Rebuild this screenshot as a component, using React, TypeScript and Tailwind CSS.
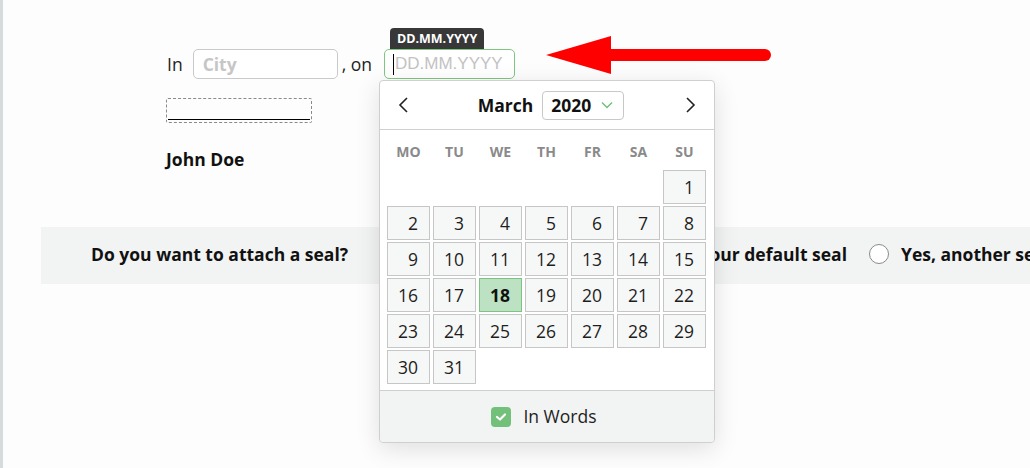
import React from 'react';

const font = { fontFamily: '"Open Sans", "Liberation Sans", sans-serif' };

const days = [
  null, null, null, null, null, null, 1,
  2, 3, 4, 5, 6, 7, 8,
  9, 10, 11, 12, 13, 14, 15,
  16, 17, 18, 19, 20, 21, 22,
  23, 24, 25, 26, 27, 28, 29,
  30, 31,
];

const weekDays = ['MO', 'TU', 'WE', 'TH', 'FR', 'SA', 'SU'];

function Chevron({ dir }: { dir: 'left' | 'right' }) {
  return (
    <svg width="16" height="18" viewBox="0 0 16 18" fill="none" stroke="#222" strokeWidth="1.6">
      {dir === 'left' ? <path d="M11 2 L4 9 L11 16" /> : <path d="M5 2 L12 9 L5 16" />}
    </svg>
  );
}

function DatePicker() {
  return (
    <div className="absolute left-[-5px] top-[31px] z-20 flex w-[336px] flex-col rounded-[4px] border border-[#cfcfcf] bg-white shadow-[0_6px_24px_rgba(0,0,0,0.12)]">
      <div className="flex h-[49px] items-center justify-between border-b border-[#d0d0d0] px-[16px]">
        <Chevron dir="left" />
        <div className="flex items-center gap-[9px] pl-[8px]">
          <span className="text-[17.5px] font-bold text-[#111]">March</span>
          <div className="flex h-[29px] w-[82px] items-center justify-between rounded-[4px] border border-[#c8c8c8] pl-[8px] pr-[10px]">
            <span className="text-[17.5px] font-bold text-[#111]">2020</span>
            <svg width="12" height="8" viewBox="0 0 12 8" fill="none" stroke="#6cc07a" strokeWidth="1.4">
              <path d="M1 1.5 L6 6.5 L11 1.5" />
            </svg>
          </div>
        </div>
        <Chevron dir="right" />
      </div>
      <div className="pb-[6px] pl-[7px] pr-[8px]">
        <div className="grid h-[40px] grid-cols-[repeat(7,43px)] items-center gap-x-[3px] pt-[2px]">
          {weekDays.map((d) => (
            <span key={d} className="text-center text-[14px] font-bold text-[#8a8a8a]">
              {d}
            </span>
          ))}
        </div>
        <div className="grid grid-cols-[repeat(7,43px)] gap-x-[3px] gap-y-[2px]">
          {days.map((d, i) =>
            d === null ? (
              <div key={i} className="h-[34px]" />
            ) : d === 18 ? (
              <div
                key={i}
                className="flex h-[34px] items-center justify-end border border-[#7cc47f] bg-[#bde2c3] pr-[11px] text-[17.5px] font-bold text-[#111]"
              >
                {d}
              </div>
            ) : (
              <div
                key={i}
                className="flex h-[34px] items-center justify-end border border-[#c6c6c6] bg-[#f6f8f8] pr-[11px] text-[17.5px] text-[#1e1e1e]"
              >
                {d}
              </div>
            )
          )}
        </div>
      </div>
      <div className="flex h-[52px] items-center justify-center gap-[12px] rounded-b-[4px] border-t border-[#cfcfcf] bg-[#f2f3f3] pr-[6px]">
        <div className="flex h-[20px] w-[20px] items-center justify-center rounded-[4px] bg-[#72c07a]">
          <svg width="12" height="10" viewBox="0 0 12 10" fill="none" stroke="#fff" strokeWidth="2.2" strokeLinecap="round" strokeLinejoin="round">
            <path d="M2 5 L5 7.5 L10 2.5" />
          </svg>
        </div>
        <span className="text-[17.5px] text-[#1e1e1e]">In Words</span>
      </div>
    </div>
  );
}

export default function App() {
  return (
    <div className="relative h-[468px] w-[1030px] overflow-hidden border-l-[3px] border-[#d6dbdb] bg-[#fdfdfd]" style={font}>
      <div className="flex flex-col pt-[49px]">
        <div className="flex h-[30px] items-center pl-[164px] text-[17.5px] text-[#222]">
          <span>In</span>
          <div className="ml-[10px] flex h-[30px] w-[145px] items-center rounded-[5px] border border-[#c9c9c9] bg-white pl-[9px]">
            <span className="font-bold text-[#c6c6c6]">City</span>
          </div>
          <span className="ml-[4px]">, on</span>
          <div className="relative ml-[12px]">
            <div className="absolute left-[6px] top-[-21px] whitespace-nowrap rounded-t-[4px] bg-[#383838] px-[7px] py-[3px] text-[12.5px] font-bold leading-[15px] text-white">
              DD.MM.YYYY
            </div>
            <div className="flex h-[30px] w-[131px] items-center rounded-[5px] border border-[#7ec781] bg-white pl-[8px]">
              <span className="mr-px h-[21px] w-px bg-black" />
              <span className="text-[17px] text-[#c3c3c3]" style={{ fontFamily: '"Liberation Sans", Arial, sans-serif' }}>
                DD.MM.YYYY
              </span>
            </div>
            <DatePicker />
          </div>
        </div>

        <div className="ml-[163px] mt-[19px] flex h-[25px] w-[146px] flex-col justify-end rounded-[2px] border border-dashed border-[#8a8a8a] px-px pb-[2px]">
          <div className="h-px bg-black" />
        </div>

        <div className="ml-[163px] mt-[24px] text-[17.5px] font-bold leading-[24px] text-[#111]">John Doe</div>

        <div className="ml-[38px] mt-[56px] flex h-[57px] items-center whitespace-nowrap bg-[#f2f3f3] pb-[3px] pl-[50px] text-[17.5px] font-bold text-[#111]">
          <span className="w-[262px] shrink-0">Do you want to attach a seal?</span>
          <label className="ml-[275px] flex shrink-0 items-center gap-[12px]">
            <span className="h-[20px] w-[20px] rounded-full border border-[#8a8a8a] bg-white" />
            <span>Yes, your default seal</span>
          </label>
          <label className="ml-[22px] flex shrink-0 items-center gap-[12px]">
            <span className="h-[20px] w-[20px] rounded-full border border-[#8a8a8a] bg-white" />
            <span>Yes, another seal</span>
          </label>
        </div>
      </div>

      <svg className="absolute left-[540px] top-[30px] z-30" width="236" height="50" viewBox="540 30 236 50">
        <path d="M543 55 L608 36 L608 74 Z" fill="#ff0000" />
        <line x1="600" y1="55" x2="762" y2="55" stroke="#ff0000" strokeWidth="12" strokeLinecap="round" />
      </svg>
    </div>
  );
}
